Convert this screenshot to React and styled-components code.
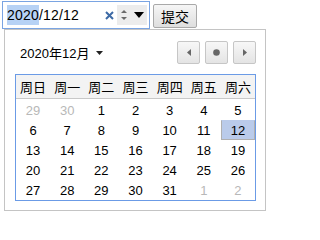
import React from "react";
import styled, { createGlobalStyle } from "styled-components";

const GlobalStyle = createGlobalStyle`
  body {
    margin: 0;
    background: #fff;
    font-family: "Liberation Sans", Arial, "Noto Sans CJK SC", sans-serif;
    font-size: 13px;
    color: #000;
  }
`;

const Page = styled.div`
  padding: 1px 2px;
`;

const Toolbar = styled.div`
  display: flex;
  align-items: center;
  gap: 3px;
`;

const DateInput = styled.div`
  width: 148px;
  height: 28px;
  box-sizing: border-box;
  border: 1px solid #7aa4e2;
  display: flex;
  align-items: center;
  padding-left: 4px;
`;

const Value = styled.div`
  flex: 1;
  font-size: 14px;
  letter-spacing: 0.2px;
`;

const Selected = styled.span`
  background: #b7d2f5;
  padding: 2px 0;
`;

const Controls = styled.div`
  display: flex;
  align-items: center;
  height: 20px;
  background: #ececec;
  margin-right: 2px;
`;

const Clear = styled.div`
  width: 12px;
  height: 20px;
  display: flex;
  align-items: center;
  justify-content: center;
  background: #fff;
  margin-right: 2px;
`;

const Spin = styled.div`
  width: 14px;
  display: flex;
  align-items: center;
  justify-content: center;
`;

const Drop = styled.div`
  width: 16px;
  display: flex;
  align-items: center;
  justify-content: center;
`;

const SubmitButton = styled.button`
  height: 24px;
  margin-top: 1px;
  padding: 0 7px;
  border: 1px solid #a9a9a9;
  border-radius: 2px;
  background: linear-gradient(#f6f6f6, #dedede);
  font-family: "Noto Sans CJK SC", sans-serif;
  font-size: 14px;
  line-height: 20px;
  color: #000;
`;

const Popup = styled.div`
  width: 262px;
  height: 182px;
  box-sizing: border-box;
  margin-left: 2px;
  border: 1px solid #c4c4c4;
  background: #fff;
  padding: 11px 9px 0 10px;
`;

const PopupHeader = styled.div`
  display: flex;
  align-items: center;
  justify-content: space-between;
  height: 23px;
`;

const MonthLabel = styled.div`
  margin-left: 5px;
  display: flex;
  align-items: center;
  gap: 7px;
  font-family: "Liberation Sans", "Noto Sans CJK SC", sans-serif;
  font-size: 13px;
`;

const NavGroup = styled.div`
  display: flex;
  gap: 5px;
`;

const NavButton = styled.div`
  width: 23px;
  height: 23px;
  box-sizing: border-box;
  border: 1px solid #c6c6c6;
  border-radius: 2px;
  background: linear-gradient(#f7f7f7, #e4e4e4);
  display: flex;
  align-items: center;
  justify-content: center;
`;

const Table = styled.div`
  margin-top: 10px;
  width: 241px;
  box-sizing: border-box;
  border: 1px solid #6b9be6;
`;

const WeekRow = styled.div`
  display: grid;
  grid-template-columns: repeat(7, 1fr);
  height: 23px;
  background: #f3f3f3;
  border-bottom: 1px solid #c8c8c8;
`;

const WeekDay = styled.div`
  display: flex;
  align-items: center;
  justify-content: center;
  font-family: "Noto Sans CJK SC", sans-serif;
  font-size: 13px;
`;

const Days = styled.div`
  display: grid;
  grid-template-columns: repeat(7, 1fr);
  grid-auto-rows: 20px;
  padding-top: 1px;
`;

const Day = styled.div`
  display: flex;
  align-items: center;
  justify-content: center;
  font-size: 13px;
  box-sizing: border-box;
  color: ${(p) => (p.$muted ? "#b8b8b8" : "#000")};
  background: ${(p) => (p.$active ? "#bacbea" : "transparent")};
  border: 1px solid ${(p) => (p.$active ? "#b0b0b0" : "transparent")};
  border-top-color: transparent;
`;

const weekDays = ["周日", "周一", "周二", "周三", "周四", "周五", "周六"];

const days = [
  ...[29, 30].map((d) => ({ d, muted: true })),
  ...Array.from({ length: 31 }, (_, i) => ({ d: i + 1 })),
  ...[1, 2].map((d) => ({ d, muted: true })),
];

export default function App() {
  return (
    <Page>
      <GlobalStyle />
      <Toolbar>
        <DateInput>
          <Value>
            <Selected>2020</Selected>/12/12
          </Value>
          <Clear>
            <svg width="9" height="9" viewBox="0 0 9 9">
              <path d="M1 1L8 8M8 1L1 8" stroke="#3d6aa5" strokeWidth="2" />
            </svg>
          </Clear>
          <Controls>
            <Spin>
              <svg width="8" height="14" viewBox="0 0 8 14">
                <path d="M4 2L7 5H1Z" fill="#6a6a6a" />
                <path d="M4 12L7 9H1Z" fill="#6a6a6a" />
              </svg>
            </Spin>
            <Drop>
              <svg width="10" height="8" viewBox="0 0 10 8">
                <path d="M0 1H10L5 7Z" fill="#000" />
              </svg>
            </Drop>
          </Controls>
        </DateInput>
        <SubmitButton>提交</SubmitButton>
      </Toolbar>
      <Popup>
        <PopupHeader>
          <MonthLabel>
            2020年12月
            <svg width="7" height="4" viewBox="0 0 7 4">
              <path d="M0 0H7L3.5 4Z" fill="#222" />
            </svg>
          </MonthLabel>
          <NavGroup>
            <NavButton>
              <svg width="4" height="7" viewBox="0 0 4 7">
                <path d="M4 0V7L0 3.5Z" fill="#666" />
              </svg>
            </NavButton>
            <NavButton>
              <svg width="7" height="7" viewBox="0 0 7 7">
                <circle cx="3.5" cy="3.5" r="3.3" fill="#666" />
              </svg>
            </NavButton>
            <NavButton>
              <svg width="4" height="7" viewBox="0 0 4 7">
                <path d="M0 0V7L4 3.5Z" fill="#666" />
              </svg>
            </NavButton>
          </NavGroup>
        </PopupHeader>
        <Table>
          <WeekRow>
            {weekDays.map((w) => (
              <WeekDay key={w}>{w}</WeekDay>
            ))}
          </WeekRow>
          <Days>
            {days.map((day, i) => (
              <Day key={i} $muted={day.muted} $active={!day.muted && day.d === 12}>
                {day.d}
              </Day>
            ))}
          </Days>
        </Table>
      </Popup>
    </Page>
  );
}
